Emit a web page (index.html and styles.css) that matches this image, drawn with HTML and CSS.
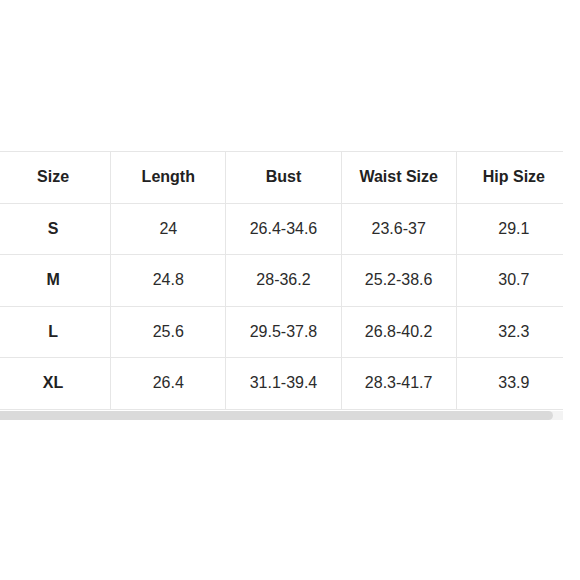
FILE: index.html
```html
<!DOCTYPE html>
<html>
<head>
<meta charset="utf-8">
<link rel="stylesheet" href="styles.css">
</head>
<body>
<div class="page">
  <div class="scroller">
    <table class="size-table">
      <thead>
        <tr><th>Size</th><th>Length</th><th>Bust</th><th>Waist Size</th><th>Hip Size</th></tr>
      </thead>
      <tbody>
        <tr><th>S</th><td>24</td><td>26.4-34.6</td><td>23.6-37</td><td>29.1</td></tr>
        <tr><th>M</th><td>24.8</td><td>28-36.2</td><td>25.2-38.6</td><td>30.7</td></tr>
        <tr><th>L</th><td>25.6</td><td>29.5-37.8</td><td>26.8-40.2</td><td>32.3</td></tr>
        <tr><th>XL</th><td>26.4</td><td>31.1-39.4</td><td>28.3-41.7</td><td>33.9</td></tr>
      </tbody>
    </table>
  </div>
  <div class="scrollbar"><div class="thumb"></div></div>
</div>
</body>
</html>
```
FILE: styles.css
```css
html, body {
  margin: 0;
  padding: 0;
  background: #ffffff;
}
.page {
  padding-top: 151px;
  width: 563px;
}
.scroller {
  width: 563px;
  overflow: hidden;
}
.size-table {
  margin-left: -5px;
  border-collapse: collapse;
  table-layout: fixed;
  width: 577px;
  font-family: "Liberation Sans", Arial, sans-serif;
  font-size: 16px;
  color: #2b2b2b;
}
.size-table th,
.size-table td {
  height: 50.5px;
  padding: 0;
  text-align: center;
  vertical-align: middle;
  border: 1.5px solid #e6e6e6;
}
.size-table th {
  font-weight: bold;
  color: #222;
}
.size-table td {
  font-weight: normal;
}
.scrollbar {
  margin-top: 1px;
  height: 9px;
  background: #f3f3f3;
  width: 563px;
}
.thumb {
  width: 553px;
  height: 9px;
  background: #dadada;
  border-radius: 0 5px 5px 0;
}
```
